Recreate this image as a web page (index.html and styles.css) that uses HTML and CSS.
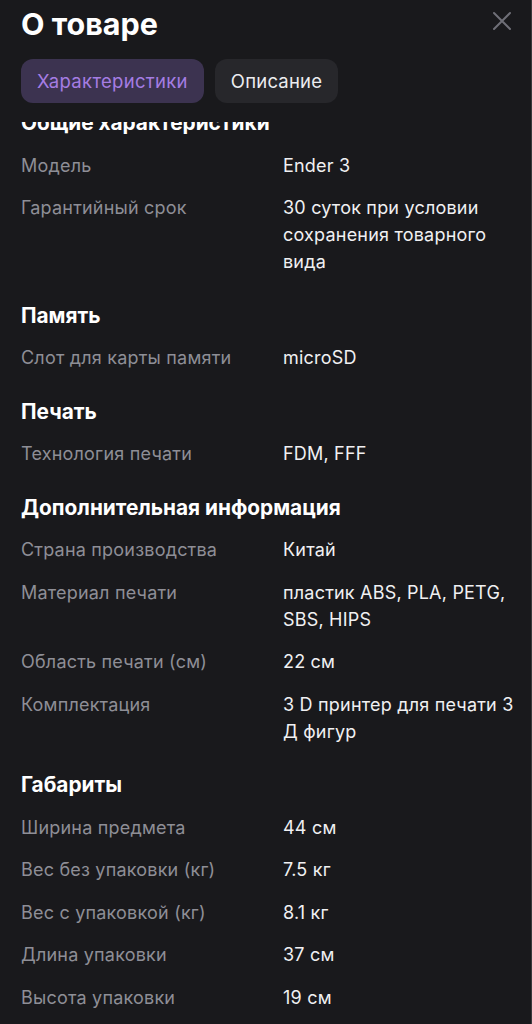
FILE: index.html
```html
<!DOCTYPE html>
<html lang="ru">
<head>
<meta charset="utf-8">
<link rel="stylesheet" href="styles.css">
</head>
<body>
<div class="sheet">
  <div class="header">
    <div class="title-row">
      <h1 class="title">О товаре</h1>
      <button class="close" aria-label="Закрыть">
        <svg width="20" height="20" viewBox="0 0 20 20"><path d="M2 2 L18 18 M18 2 L2 18" stroke="#6f6f77" stroke-width="2" stroke-linecap="round" fill="none"/></svg>
      </button>
    </div>
    <div class="tabs">
      <div class="tab tab-active">Характеристики</div>
      <div class="tab">Описание</div>
    </div>
  </div>
  <div class="scroll">
    <div class="list">
      <section class="group">
        <h2 class="group-title">Общие характеристики</h2>
        <div class="row"><div class="label">Модель</div><div class="value">Ender 3</div></div>
        <div class="row"><div class="label">Гарантийный срок</div><div class="value">30 суток при условии сохранения товарного вида</div></div>
      </section>
      <section class="group">
        <h2 class="group-title">Память</h2>
        <div class="row"><div class="label">Слот для карты памяти</div><div class="value">microSD</div></div>
      </section>
      <section class="group">
        <h2 class="group-title">Печать</h2>
        <div class="row"><div class="label">Технология печати</div><div class="value">FDM, FFF</div></div>
      </section>
      <section class="group">
        <h2 class="group-title">Дополнительная информация</h2>
        <div class="row"><div class="label">Страна производства</div><div class="value">Китай</div></div>
        <div class="row"><div class="label">Материал печати</div><div class="value">пластик ABS, PLA, PETG, SBS, HIPS</div></div>
        <div class="row"><div class="label">Область печати (см)</div><div class="value">22 см</div></div>
        <div class="row"><div class="label">Комплектация</div><div class="value">3 D принтер для печати 3 Д фигур</div></div>
      </section>
      <section class="group">
        <h2 class="group-title">Габариты</h2>
        <div class="row"><div class="label">Ширина предмета</div><div class="value">44 см</div></div>
        <div class="row"><div class="label">Вес без упаковки (кг)</div><div class="value">7.5 кг</div></div>
        <div class="row"><div class="label">Вес с упаковкой (кг)</div><div class="value">8.1 кг</div></div>
        <div class="row"><div class="label">Длина упаковки</div><div class="value">37 см</div></div>
        <div class="row"><div class="label">Высота упаковки</div><div class="value">19 см</div></div>
      </section>
    </div>
  </div>
</div>
</body>
</html>
```
FILE: styles.css
```css
* { box-sizing: border-box; }
html, body {
  margin: 0;
  padding: 0;
  background: #19191c;
  font-family: Inter, "Noto Sans", sans-serif;
  color: #f2f2f4;
}
.sheet {
  height: 1024px;
  display: flex;
  flex-direction: column;
  overflow: hidden;
  border-right: 1px solid #3a3a3e;
}
.header {
  padding: 7px 21px 0 21px;
  flex: none;
}
.title-row {
  display: flex;
  justify-content: space-between;
  align-items: center;
}
.title {
  margin: 0;
  font-size: 30.5px;
  line-height: 34px;
  font-weight: 700;
  color: #ffffff;
}
.close {
  background: none;
  border: 0;
  padding: 0;
  width: 20px;
  height: 20px;
  margin-right: -2px;
  margin-top: -6px;
  display: flex;
}
.tabs {
  display: flex;
  gap: 11px;
  margin-top: 18px;
}
.tab {
  height: 44px;
  display: flex;
  align-items: center;
  padding: 0 16px;
  border-radius: 12px;
  background: #27272b;
  color: #ededf0;
  font-size: 18.5px;
  letter-spacing: 0.2px;
}
.tab-active {
  background: #3c3350;
  color: #a57de3;
  letter-spacing: 0.3px;
}
.scroll {
  flex: 1;
  overflow: hidden;
  margin-top: 19px;
}
.list {
  margin-top: -13px;
  padding: 0 14px 0 21px;
  display: flex;
  flex-direction: column;
  gap: 26.5px;
}
.group {
  display: flex;
  flex-direction: column;
  gap: 15.5px;
}
.group-title {
  margin: 0;
  font-size: 20.8px;
  line-height: 27px;
  font-weight: 700;
  color: #ffffff;
}
.row {
  display: grid;
  grid-template-columns: 262px 1fr;
  font-size: 18px;
  line-height: 27px;
  letter-spacing: 0.2px;
}
.label {
  color: #8e8e96;
}
.value {
  color: #f0f0f2;
}
```
